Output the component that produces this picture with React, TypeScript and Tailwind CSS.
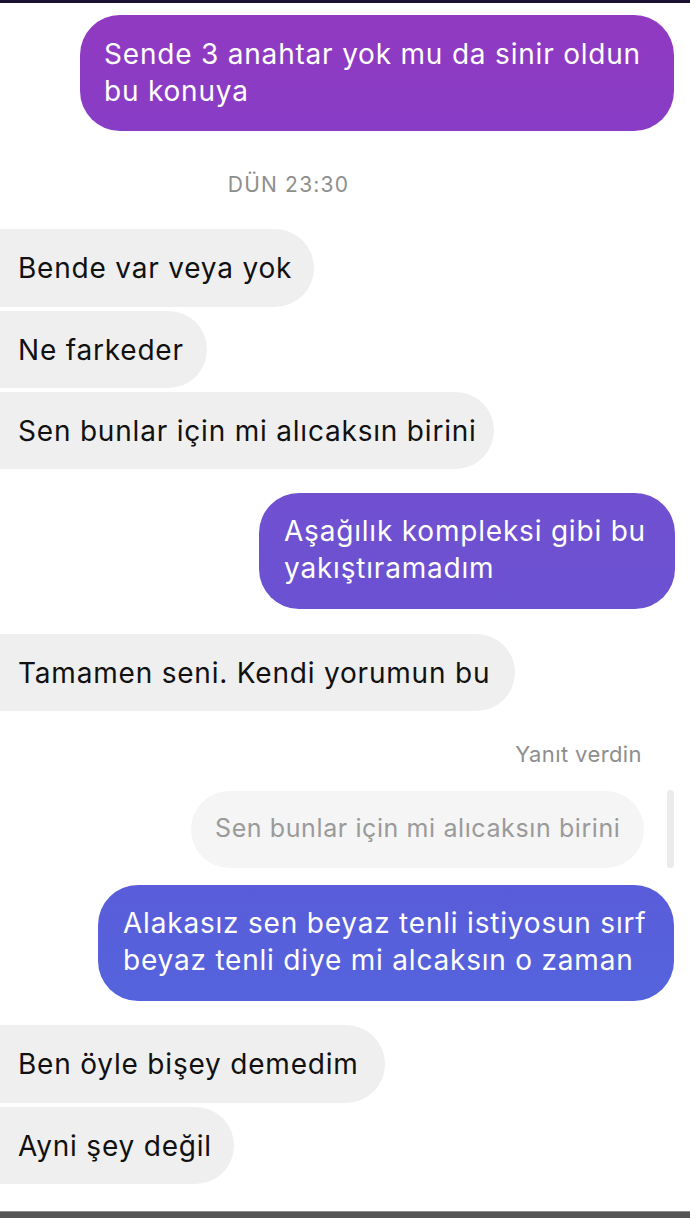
export default function App() {
  const font = { fontFamily: 'Inter, "Liberation Sans", sans-serif' };

  return (
    <div className="relative w-[690px] h-[1218px] bg-white overflow-hidden" style={font}>
      {/* top status strip */}
      <div className="h-[3px] bg-[#1c1030]" />

      <div className="flex flex-col">
        {/* outgoing 1 */}
        <div className="flex justify-end pr-[16px] mt-[12px]">
          <div className="w-[594px] h-[116px] rounded-[40px] bg-gradient-to-b from-[#9139c1] to-[#883dc6] pl-[24px] pt-[21px] text-white text-[28px] leading-[37px] tracking-[0.8px]">
            Sende 3 anahtar yok mu da sinir oldun
            <br />
            bu konuya
          </div>
        </div>

        {/* timestamp */}
        <div className="mt-[42px] h-[24px] flex justify-center">
          <span className="ml-[-113px] text-[21px] leading-[24px] text-[#8e8e8e] tracking-[1.2px]">DÜN 23:30</span>
        </div>

        {/* incoming group */}
        <div className="mt-[32px] flex flex-col gap-[4px]">
          <div className="w-[314px] h-[78px] rounded-r-[39px] bg-[#efefef] pl-[18px] flex items-center text-[28px] text-[#111] tracking-[0.8px]">
            Bende var veya yok
          </div>
          <div className="w-[207px] h-[77px] rounded-r-[39px] bg-[#efefef] pl-[18px] flex items-center text-[28px] text-[#111] tracking-[0.8px]">
            Ne farkeder
          </div>
          <div className="w-[494px] h-[77px] rounded-r-[39px] bg-[#efefef] pl-[18px] flex items-center text-[28px] text-[#111] tracking-[0.8px]">
            Sen bunlar için mi alıcaksın birini
          </div>
        </div>

        {/* outgoing 2 */}
        <div className="flex justify-end pr-[15px] mt-[24px]">
          <div className="w-[416px] h-[116px] rounded-[40px] bg-gradient-to-b from-[#7150d0] to-[#6a52d2] pl-[25px] pt-[20px] text-white text-[28px] leading-[37px] tracking-[0.8px]">
            Aşağılık kompleksi gibi bu
            <br />
            yakıştıramadım
          </div>
        </div>

        {/* incoming */}
        <div className="mt-[25px] w-[515px] h-[77px] rounded-r-[39px] bg-[#efefef] pl-[18px] flex items-center text-[28px] text-[#111] tracking-[0.8px]">
          Tamamen seni. Kendi yorumun bu
        </div>

        {/* reply label */}
        <div className="mt-[30px] h-[26px] flex justify-end pr-[48px]">
          <span className="text-[22px] leading-[26px] text-[#8e8e8e] tracking-[0.4px]">Yanıt verdin</span>
        </div>

        {/* quoted reply */}
        <div className="mt-[23px] flex justify-end items-center gap-[23px] pr-[16px]">
          <div className="w-[453px] h-[77px] rounded-[39px] bg-[#f5f5f5] pl-[24px] flex items-center text-[25px] text-[#9a9a9a] tracking-[0.6px]">
            Sen bunlar için mi alıcaksın birini
          </div>
          <div className="w-[7px] h-[78px] rounded-full bg-[#ebebeb]" />
        </div>

        {/* outgoing 3 */}
        <div className="flex justify-end pr-[16px] mt-[17px]">
          <div className="w-[576px] h-[116px] rounded-[40px] bg-gradient-to-b from-[#5a5cda] to-[#5464dd] pl-[25px] pt-[20px] text-white text-[28px] leading-[37px] tracking-[0.8px]">
            Alakasız sen beyaz tenli istiyosun sırf
            <br />
            beyaz tenli diye mi alcaksın o zaman
          </div>
        </div>

        {/* incoming group */}
        <div className="mt-[24px] flex flex-col gap-[4px]">
          <div className="w-[385px] h-[78px] rounded-r-[39px] bg-[#efefef] pl-[18px] flex items-center text-[28px] text-[#111] tracking-[0.8px]">
            Ben öyle bişey demedim
          </div>
          <div className="w-[234px] h-[77px] rounded-r-[39px] bg-[#efefef] pl-[18px] flex items-center text-[28px] text-[#111] tracking-[0.8px]">
            Ayni şey değil
          </div>
        </div>
      </div>

      {/* bottom bar */}
      <div className="absolute left-0 right-0 bottom-0 h-[7px] bg-[#555555] border-t border-[#8a8a8a]" />
    </div>
  );
}
